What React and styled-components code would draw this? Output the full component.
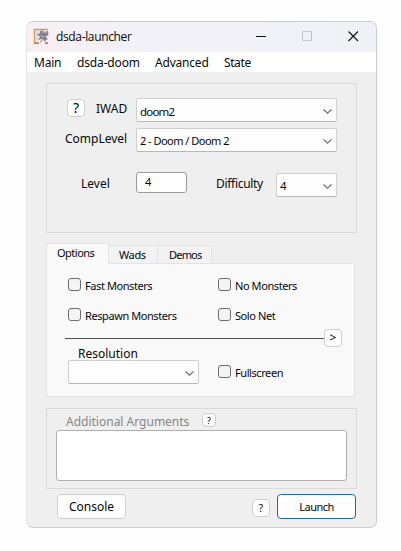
import React from "react";
import styled, { createGlobalStyle } from "styled-components";

const GlobalStyle = createGlobalStyle`
  * { box-sizing: border-box; }
  body { margin: 0; background: #fefefe; }
  button { font-family: inherit; color: inherit; }
`;

const Window = styled.main`
  width: 351px;
  height: 507px;
  margin: 21px 0 0 26px;
  display: flex;
  flex-direction: column;
  overflow: hidden;
  background: #efefef;
  border: 1px solid #cdcdcd;
  border-left-color: #e4e4e4;
  border-radius: 7px;
  font-family: "Noto Sans", "Open Sans", sans-serif;
  color: #08080c;
`;

const TitleBar = styled.header`
  height: 30px;
  flex: none;
  display: flex;
  align-items: center;
  padding: 0 17px 1px 6px;
  background: linear-gradient(90deg, #f8eff3 0, #f2f1f7 90px, #f0f1f7 100%);
`;

const Title = styled.h1`
  flex: 1;
  margin: 1px 0 0 6px;
  font: 400 12px/16px "Open Sans", sans-serif;
  letter-spacing: -0.35px;
`;

const WindowControls = styled.div`
  display: flex;
  align-items: center;
  gap: 35px;
`;

const MenuBar = styled.nav`
  height: 20px;
  flex: none;
  display: flex;
  padding: 2px 0 0 7px;
  background: #fff;
`;

const Label = styled.span`
  flex: none;
  width: ${(p) => (p.$w ? `${p.$w}px` : "auto")};
  margin-left: ${(p) => p.$left || 0}px;
  margin-top: ${(p) => p.$top || 0}px;
  font-size: ${(p) => p.$size || 12}px;
  line-height: 18px;
  letter-spacing: ${(p) => p.$spacing || 0}px;
  color: ${(p) => (p.$muted ? "#868686" : "inherit")};
  white-space: nowrap;
`;

const Content = styled.div`
  flex: 1;
  padding: 11px 0 0 19px;
`;

const Group = styled.section`
  width: 311px;
  height: ${(p) => p.$h}px;
  border: 1px solid #dadada;
`;

const Row = styled.div`
  display: flex;
  align-items: flex-start;
  height: ${(p) => p.$h}px;
  padding-left: ${(p) => p.$left || 0}px;
  padding-top: ${(p) => p.$top || 0}px;
`;

const SmallButton = styled.button`
  flex: none;
  width: ${(p) => p.$size || 18}px;
  height: ${(p) => p.$size || 18}px;
  margin: ${(p) => p.$top || 0}px 0 0 ${(p) => p.$left || 0}px;
  padding: 0;
  display: flex;
  align-items: center;
  justify-content: center;
  background: #fdfdfd;
  border: 1px solid #cfcfcf;
  border-radius: 4px;
  font-size: ${(p) => p.$font || 10}px;
  line-height: 1;
`;

const Select = styled.div`
  flex: none;
  width: ${(p) => p.$w}px;
  height: 24px;
  margin: ${(p) => p.$top || 0}px 0 0 ${(p) => p.$left || 0}px;
  padding: 3px 4px 0 3px;
  display: flex;
  justify-content: space-between;
  background: #fdfdfd;
  border: 1px solid #cfcfcf;
  border-bottom-color: #b8b8b8;
  border-radius: 2px;
`;

const Chevron = styled.svg`
  width: 9px;
  height: 5px;
  margin-top: 7px;
`;

const Field = styled.div`
  flex: none;
  width: 51px;
  height: 21px;
  margin-left: 26px;
  padding-left: 8px;
  display: flex;
  background: #fff;
  border: 1px solid #9b9b9b;
  border-radius: 3px;
`;

const Tabs = styled.div`
  display: flex;
  align-items: flex-end;
  height: 20px;
  margin-top: 10px;
`;

const Tab = styled.div`
  display: flex;
  width: ${(p) => p.$w}px;
  height: ${(p) => (p.$active ? 21 : 18)}px;
  margin-bottom: ${(p) => (p.$active ? -1 : 0)}px;
  padding-left: ${(p) => p.$pad}px;
  padding-top: ${(p) => (p.$active ? 1 : 0)}px;
  z-index: ${(p) => (p.$active ? 1 : 0)};
  background: ${(p) => (p.$active ? "#f9f9f9" : "#f3f3f3")};
  border: 1px solid #e3e3e3;
  border-bottom: 0;
  border-left-width: ${(p) => (p.$active ? 1 : 0)}px;
`;

const Panel = styled.section`
  width: 309px;
  height: 134px;
  margin-bottom: 11px;
  background: #f9f9f9;
  border: 1px solid #e3e3e3;
`;

const Check = styled.label`
  display: flex;
  flex: none;
  width: ${(p) => p.$w || 150}px;
`;

const Box = styled.span`
  flex: none;
  width: 13px;
  height: 13px;
  margin-right: 4px;
  background: #f4f4f4;
  border: 1px solid #6c6c6c;
  border-radius: 3px;
`;

const Rule = styled.div`
  width: 259px;
  height: 1px;
  margin-top: 9px;
  background: #505050;
`;

const TextArea = styled.div`
  width: 291px;
  height: 51px;
  margin-left: 9px;
  background: #fff;
  border: 1px solid #b0b0b0;
  border-radius: 3px;
`;

const Button = styled.button`
  flex: none;
  width: ${(p) => p.$w}px;
  height: 25px;
  padding: 0;
  margin-left: ${(p) => p.$left || 0}px;
  display: flex;
  align-items: center;
  justify-content: center;
  background: #fdfdfd;
  border: 1px solid ${(p) => (p.$primary ? "#1c6ca8" : "#cfcfcf")};
  border-radius: 4px;
`;

const Arrow = () => (
  <Chevron viewBox="0 0 9 5">
    <path d="M.5.5 4.5 4.2 8.5.5" fill="none" stroke="#707070" strokeWidth="1.1" />
  </Chevron>
);

const AppIcon = () => (
  <svg width="17" height="17" viewBox="0 0 17 17">
    <path d="M1.5 15V1.5H15" fill="none" stroke="#cf9a62" strokeWidth="1.4" />
    <path d="M1 15.2H6M12 15.2H15" fill="none" stroke="#c98040" strokeWidth="1.8" />
    <path d="M3 3h4v4L5 9l1 3-3 2z" fill="#dedade" />
    <path d="M7 3l3-1 1 2 4-1 .5 4-3 1.5L15 11l-4 2-2-2-4 1 2-3-3-3 3-.5z" fill="#85848e" />
    <path d="M9 3l1.5 2M12 5l2-1M8 8l3 1" stroke="#bbb9c0" strokeWidth="1" />
    <path d="M9 12l-2 2.5M11.500 12l1 2" stroke="#a5988f" strokeWidth="1.1" />
  </svg>
);

const Option = ({ text, w }) => (
  <Check $w={w}>
    <Box />
    <Label $size={11} $spacing={-0.42} $top={-1}>{text}</Label>
  </Check>
);

export default function App() {
  return (
    <>
      <GlobalStyle />
      <Window>
        <TitleBar>
          <AppIcon />
          <Title>dsda-launcher</Title>
          <WindowControls>
            <svg width="11" height="11" viewBox="0 0 11 11">
              <path d="M0 5.5h10" stroke="#111" />
            </svg>
            <svg width="11" height="11" viewBox="0 0 11 11">
              <rect x=".5" y=".5" width="9" height="9" rx=".5" fill="none" stroke="#c3c4ca" />
            </svg>
            <svg width="11" height="11" viewBox="0 0 11 11">
              <path d="M.5.5l9.500 9.500M10 .5l-9.500 9.500" stroke="#17171c" strokeWidth="1.2" />
            </svg>
          </WindowControls>
        </TitleBar>
        <MenuBar>
          <Label $w={43} $spacing={-0.2}>Main</Label>
          <Label $w={78} $spacing={-0.15}>dsda-doom</Label>
          <Label $w={69} $spacing={-0.2}>Advanced</Label>
          <Label $spacing={-0.4}>State</Label>
        </MenuBar>
        <Content>
          <Group $h={150}>
            <Row $h={44} $top={14} $left={20}>
              <SmallButton $font={14} $top={1}>?</SmallButton>
              <Label $left={11} $w={40} $top={2}>IWAD</Label>
              <Select $w={201}><Label $size={11.5} $spacing={-0.8} $top={1}>doom2</Label><Arrow /></Select>
            </Row>
            <Row $h={44} $left={18}>
              <Label $w={71} $top={2}>CompLevel</Label>
              <Select $w={201}><Label $size={11} $spacing={-0.52}>2 - Doom / Doom 2</Label><Arrow /></Select>
            </Row>
            <Row $h={30} $left={34}>
              <Label $w={29} $top={3}>Level</Label>
              <Field><Label $size={11}>4</Label></Field>
              <Label $left={29} $w={60} $top={3} $spacing={-0.3}>Difficulty</Label>
              <Select $w={61} $top={1}><Label $size={11.5}>4</Label><Arrow /></Select>
            </Row>
          </Group>
          <Tabs>
            <Tab $active $w={63} $pad={10}><Label $size={11} $spacing={-0.5} $top={-1}>Options</Label></Tab>
            <Tab $w={49} $pad={10}><Label $size={11} $spacing={-0.4} $top={0}>Wads</Label></Tab>
            <Tab $w={54} $pad={11}><Label $size={11} $spacing={-0.8} $top={0}>Demos</Label></Tab>
          </Tabs>
          <Panel>
            <Row $h={44} $top={14} $left={21}>
              <Option text="Fast Monsters" />
              <Option text="No Monsters" />
            </Row>
            <Row $h={21} $left={21}>
              <Option text="Respawn Monsters" />
              <Option text="Solo Net" />
            </Row>
            <Row $h={18} $left={18}>
              <Rule />
              <SmallButton $font={12}>&gt;</SmallButton>
            </Row>
            <Row $h={13} $left={31}><Label $top={-2}>Resolution</Label></Row>
            <Row $h={24} $left={21}>
              <Select $w={131}><span /><Arrow /></Select>
              <Row $top={5} $left={19}><Option text="Fullscreen" w={80} /></Row>
            </Row>
          </Panel>
          <Group $h={81}>
            <Row $h={21} $top={4} $left={19}>
              <Label $muted $w={136}>Additional Arguments</Label>
              <SmallButton $size={14} $font={9}>?</SmallButton>
            </Row>
            <TextArea />
          </Group>
          <Row $top={5} $left={11}>
            <Button $w={69}><Label $top={1}>Console</Label></Button>
            <SmallButton $left={126} $top={5}>?</SmallButton>
            <Button $w={79} $left={7} $primary><Label $size={11} $spacing={-0.55}>Launch</Label></Button>
          </Row>
        </Content>
      </Window>
    </>
  );
}
